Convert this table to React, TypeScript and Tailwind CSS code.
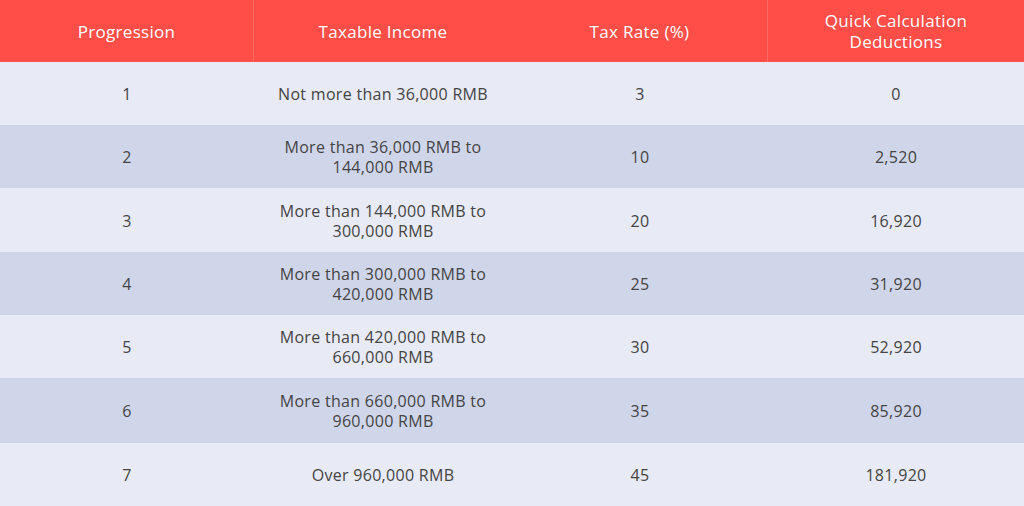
import React from "react";

interface Bracket {
  level: number;
  income: string[];
  rate: number;
  deduction: string;
}

const brackets: Bracket[] = [
  { level: 1, income: ["Not more than 36,000 RMB"], rate: 3, deduction: "0" },
  { level: 2, income: ["More than 36,000 RMB to", "144,000 RMB"], rate: 10, deduction: "2,520" },
  { level: 3, income: ["More than 144,000 RMB to", "300,000 RMB"], rate: 20, deduction: "16,920" },
  { level: 4, income: ["More than 300,000 RMB to", "420,000 RMB"], rate: 25, deduction: "31,920" },
  { level: 5, income: ["More than 420,000 RMB to", "660,000 RMB"], rate: 30, deduction: "52,920" },
  { level: 6, income: ["More than 660,000 RMB to", "960,000 RMB"], rate: 35, deduction: "85,920" },
  { level: 7, income: ["Over 960,000 RMB"], rate: 45, deduction: "181,920" },
];

const rowHeights = ["h-[63px]", "h-[63px]", "h-[64px]", "h-[63px]", "h-[63px]", "h-[65px]", "h-[63px]"];

export default function App() {
  return (
    <div
      className="w-[1024px] h-[506px] flex flex-col"
      style={{ fontFamily: '"Open Sans", "Liberation Sans", sans-serif' }}
    >
      {/* header */}
      <div className="h-[62px] grid grid-cols-[254px_258px_256px_256px] bg-[#ff4d47] text-white text-[17px] leading-[21px] tracking-[0.3px]">
        <div className="flex items-center justify-center border-r border-[#ff6a63]">Progression</div>
        <div className="flex items-center justify-center">Taxable Income</div>
        <div className="flex items-center justify-center border-r border-[#ff6a63]">Tax Rate (%)</div>
        <div className="flex flex-col items-center justify-center text-center">
          <span>Quick Calculation</span>
          <span>Deductions</span>
        </div>
      </div>

      {brackets.map((b, i) => (
        <div
          key={b.level}
          className={`${rowHeights[i]} grid grid-cols-[254px_258px_256px_256px] pt-[1px] text-[#444] text-[16px] leading-[20px] tracking-[0.3px] ${
            i % 2 === 0 ? "bg-[#e8eaf5]" : "bg-[#d0d6ea]"
          }`}
        >
          <div className="flex items-center justify-center">{b.level}</div>
          <div className="flex flex-col items-center justify-center text-center">
            {b.income.map((line) => (
              <span key={line}>{line}</span>
            ))}
          </div>
          <div className="flex items-center justify-center">{b.rate}</div>
          <div className="flex items-center justify-center">{b.deduction}</div>
        </div>
      ))}
    </div>
  );
}
